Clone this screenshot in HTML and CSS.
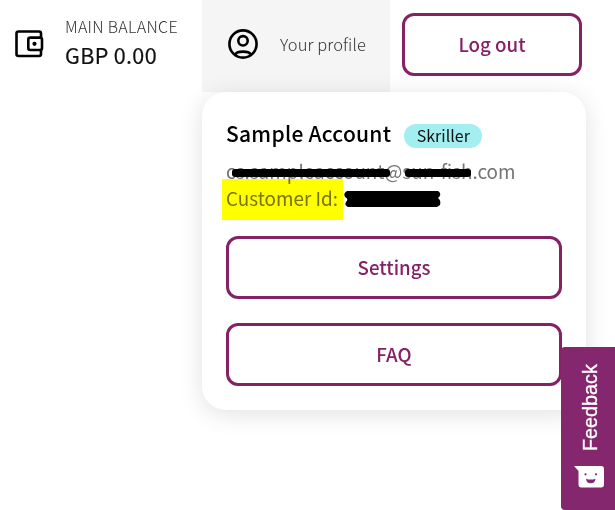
FILE: index.html
```html
<!DOCTYPE html>
<html lang="en">
<head>
    <meta charset="UTF-8">
    <meta name="viewport" content="width=device-width, initial-scale=1.0">
    <title>Your profile</title>
    <link rel="stylesheet" href="styles.css">
</head>
<body>
    <!-- Top bar -->
    <header class="topbar">
        <div class="balance">
            <svg class="wallet-icon" width="30" height="28" viewBox="0 0 30 28" fill="none" stroke="#000" stroke-width="2.6">
                <path d="M26 7V3.5Q26 1.5 24 1.5H3.5Q1.5 1.5 1.5 3.5V24Q1.5 26 3.5 26H24Q26 26 26 24V20"/>
                <rect x="13.3" y="7.6" width="13.7" height="12.4" rx="2"/>
                <circle cx="19.5" cy="13.8" r="2.1" fill="#000" stroke="none"/>
            </svg>
            <div class="balance-text">
                <span class="balance-label">MAIN BALANCE</span>
                <span class="balance-amount">GBP 0.00</span>
            </div>
        </div>
        <div class="profile-tab">
            <svg class="user-icon" width="30" height="30" viewBox="0 0 30 30" fill="none" stroke="#000" stroke-width="2.6">
                <circle cx="15" cy="15" r="13.6"/>
                <circle cx="15" cy="11.8" r="4.7"/>
                <path d="M7 25.5C9.5 21.7 20.5 21.7 23 25.5"/>
            </svg>
            <span class="profile-label">Your profile</span>
        </div>
        <button class="btn logout">Log out</button>
    </header>

    <!-- Profile dropdown -->
    <section class="profile-card">
        <div class="account-row">
            <h1 class="account-name">Sample Account</h1>
            <span class="badge">Skriller</span>
        </div>
        <div class="email">cs.sampleaccount@sun-fish.com</div>
        <div class="customer-id">Customer Id:</div>
        <button class="btn settings">Settings</button>
        <button class="btn">FAQ</button>

        <!-- Highlight and redaction marks -->
        <span class="highlight"></span>
        <svg class="redactions" width="384" height="318" viewBox="0 0 384 318">
            <rect x="30" y="77" width="158" height="8" rx="3"/>
            <rect x="203" y="77" width="66" height="8" rx="3"/>
            <path d="M145 99H236Q239 101 238 104Q235 106 237 107Q239 109 238 113L235 115H146Q142 113 144 110Q147 107 143 105Q141 101 145 99Z"/>
        </svg>
    </section>

    <!-- Feedback tab -->
    <aside class="feedback">
        <span class="feedback-text">Feedback</span>
        <svg class="feedback-icon" width="31" height="22" viewBox="0 0 31 22">
            <path fill="#fff" d="M0 0H27Q30 0 30 3V18.5Q30 21.5 27 21.5H7.5Q4.5 21.5 4.5 18.5V5Z"/>
            <circle cx="11.5" cy="8.3" r="1.1" fill="#85276e"/>
            <circle cx="22" cy="8.3" r="1.1" fill="#85276e"/>
            <path fill="#85276e" d="M12 12.7Q16.8 14.5 21.5 12.7Q21 17.2 16.8 17.2Q12.5 17.2 12 12.7Z"/>
        </svg>
    </aside>
</body>
</html>
```
FILE: styles.css
```css
* {
    box-sizing: border-box;
}
body {
    margin: 0;
    height: 510px;
    overflow: hidden;
    background: #fff;
    color: #111;
    font-family: "Noto Sans CJK SC", "Open Sans", sans-serif;
}
.topbar {
    display: flex;
    height: 92px;
}
.balance {
    display: flex;
    width: 202px;
    padding: 14px 0 0 15px;
}
.wallet-icon {
    margin: 16px 20px 0 0;
}
.balance-text {
    display: flex;
    flex-direction: column;
    white-space: nowrap;
}
.balance-label {
    font-size: 16px;
    font-weight: 300;
    line-height: 24px;
    letter-spacing: 0.3px;
    color: #333;
}
.balance-amount {
    font-size: 21.5px;
    font-weight: 400;
    line-height: 33px;
    letter-spacing: 0.35px;
    -webkit-text-stroke: 0.2px #111;
}
.profile-tab {
    display: flex;
    align-items: center;
    width: 188px;
    padding: 0 0 4px 26px;
    background: #f5f5f5;
}
.profile-label {
    margin-left: 22px;
    font-size: 16.5px;
    font-weight: 300;
    letter-spacing: 0.1px;
    color: #333;
    white-space: nowrap;
}
.btn {
    display: block;
    width: 100%;
    height: 63px;
    padding: 0 0 2px;
    border: 3px solid #862165;
    border-radius: 12px;
    background: #fff;
    color: #862165;
    font-family: inherit;
    font-size: 18.7px;
    font-weight: 500;
}
.logout {
    width: 180px;
    margin: 13px 0 0 12px;
}
.profile-card {
    position: relative;
    width: 384px;
    height: 318px;
    margin-left: 202px;
    padding: 24px;
    border-radius: 24px;
    background: #fff;
    box-shadow: 0 4px 24px rgba(0, 0, 0, 0.12);
}
.account-row {
    display: flex;
    align-items: center;
    height: 40px;
}
.account-name {
    margin: 0;
    padding-bottom: 7px;
    font-size: 21px;
    font-weight: 500;
    line-height: 36px;
    letter-spacing: 0.25px;
    color: #000;
    white-space: nowrap;
}
.badge {
    width: 78px;
    height: 24px;
    margin-left: 13px;
    border-radius: 12px;
    background: #a3eef0;
    font-size: 16px;
    line-height: 22px;
    text-align: center;
}
.email,
.customer-id {
    height: 27px;
    font-size: 18.9px;
    font-weight: 400;
    line-height: 26px;
    color: #757575;
    white-space: nowrap;
}
.email {
    margin-top: 2px;
}
.settings {
    margin: 24px 0;
}
.highlight {
    position: absolute;
    left: 20px;
    top: 87px;
    width: 121px;
    height: 41px;
    background: #ff0;
    mix-blend-mode: multiply;
}
.redactions {
    position: absolute;
    left: 0;
    top: 0;
}
.feedback {
    position: absolute;
    right: 0;
    top: 347px;
    display: flex;
    flex-direction: column;
    align-items: center;
    width: 54px;
    height: 163px;
    padding: 17px 0 0 3px;
    border-radius: 4px 0 0 4px;
    background: #85276e;
}
.feedback-text {
    height: 87px;
    color: #fff;
    font-family: "Liberation Sans", Arial, sans-serif;
    font-size: 19.8px;
    line-height: 24px;
    writing-mode: vertical-rl;
    transform: rotate(180deg);
    -webkit-text-stroke: 0.3px #fff;
}
.feedback-icon {
    margin-top: 15px;
}
```
